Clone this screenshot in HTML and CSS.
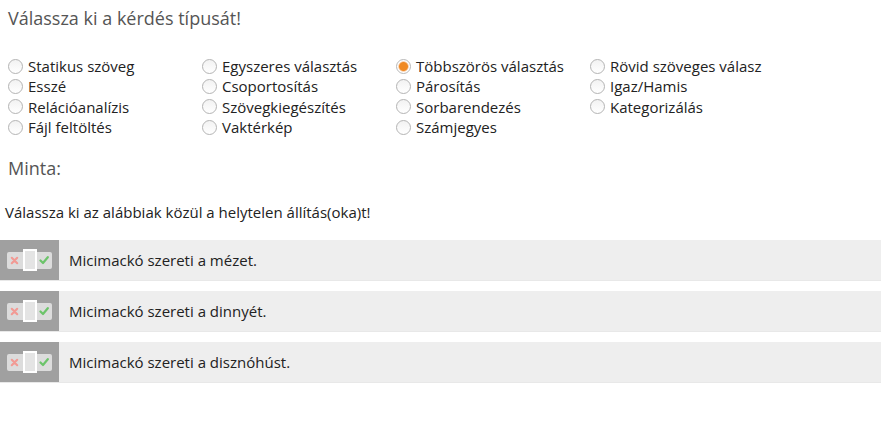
FILE: index.html
```html
<!DOCTYPE html>
<html lang="hu">
<head>
<meta charset="utf-8">
<link rel="stylesheet" href="styles.css">
</head>
<body>
<div class="page">
  <h2 class="heading">Válassza ki a kérdés típusát!</h2>
  <div class="types">
    <label class="opt"><span class="radio"></span>Statikus szöveg</label>
    <label class="opt"><span class="radio"></span>Egyszeres választás</label>
    <label class="opt"><span class="radio on"></span>Többszörös választás</label>
    <label class="opt"><span class="radio"></span>Rövid szöveges válasz</label>
    <label class="opt"><span class="radio"></span>Esszé</label>
    <label class="opt"><span class="radio"></span>Csoportosítás</label>
    <label class="opt"><span class="radio"></span>Párosítás</label>
    <label class="opt"><span class="radio"></span>Igaz/Hamis</label>
    <label class="opt"><span class="radio"></span>Relációanalízis</label>
    <label class="opt"><span class="radio"></span>Szövegkiegészítés</label>
    <label class="opt"><span class="radio"></span>Sorbarendezés</label>
    <label class="opt"><span class="radio"></span>Kategorizálás</label>
    <label class="opt"><span class="radio"></span>Fájl feltöltés</label>
    <label class="opt"><span class="radio"></span>Vaktérkép</label>
    <label class="opt"><span class="radio"></span>Számjegyes</label>
  </div>
  <h2 class="heading minta">Minta:</h2>
  <p class="question">Válassza ki az alábbiak közül a helytelen állítás(oka)t!</p>
  <div class="items">
    <div class="item">
      <div class="toggle-box"><div class="toggle"><span class="no"><svg viewBox="0 0 10 10" width="9" height="9"><path d="M2 2 L8 8 M8 2 L2 8" stroke="#f29a94" stroke-width="2.4" stroke-linecap="round"/></svg></span><span class="knob"></span><span class="yes"><svg viewBox="0 0 10 10" width="10" height="10"><path d="M1.5 5.5 L4 8 L8.8 2.2" stroke="#6cc46a" stroke-width="2.2" fill="none" stroke-linecap="round" stroke-linejoin="round"/></svg></span></div></div>
      <div class="text">Micimackó szereti a mézet.</div>
    </div>
    <div class="item">
      <div class="toggle-box"><div class="toggle"><span class="no"><svg viewBox="0 0 10 10" width="9" height="9"><path d="M2 2 L8 8 M8 2 L2 8" stroke="#f29a94" stroke-width="2.4" stroke-linecap="round"/></svg></span><span class="knob"></span><span class="yes"><svg viewBox="0 0 10 10" width="10" height="10"><path d="M1.5 5.5 L4 8 L8.8 2.2" stroke="#6cc46a" stroke-width="2.2" fill="none" stroke-linecap="round" stroke-linejoin="round"/></svg></span></div></div>
      <div class="text">Micimackó szereti a dinnyét.</div>
    </div>
    <div class="item">
      <div class="toggle-box"><div class="toggle"><span class="no"><svg viewBox="0 0 10 10" width="9" height="9"><path d="M2 2 L8 8 M8 2 L2 8" stroke="#f29a94" stroke-width="2.4" stroke-linecap="round"/></svg></span><span class="knob"></span><span class="yes"><svg viewBox="0 0 10 10" width="10" height="10"><path d="M1.5 5.5 L4 8 L8.8 2.2" stroke="#6cc46a" stroke-width="2.2" fill="none" stroke-linecap="round" stroke-linejoin="round"/></svg></span></div></div>
      <div class="text">Micimackó szereti a disznóhúst.</div>
    </div>
  </div>
</div>
</body>
</html>
```
FILE: styles.css
```css
html, body { margin: 0; padding: 0; background: #fff; }
body { font-family: "Open Sans", "Noto Sans", sans-serif; color: #222; }
.page { width: 881px; }
.heading {
  margin: 0;
  padding: 6px 8px 0;
  font-size: 18px;
  font-weight: normal;
  color: #555;
  line-height: 24px;
}
.types {
  display: grid;
  grid-template-columns: repeat(4, 194px);
  grid-auto-rows: 20.3px;
  padding: 26px 8px 0;
  font-size: 15px;
}
.opt { display: flex; align-items: center; white-space: nowrap; }
.radio {
  width: 15px; height: 15px;
  border: 1px solid #b4b4b4;
  border-radius: 50%;
  background: linear-gradient(#f2f2f2, #fff);
  margin-right: 5px;
  box-sizing: border-box;
  flex: none;
}
.radio.on {
  border-color: #b8b8b8;
  background: radial-gradient(circle, #f08a24 0, #f08a24 4px, #f6c9a0 4.8px, #fff 5.6px);
}
.minta { padding-top: 19px; }
.question { margin: 0; padding: 21px 5px 0; font-size: 15px; line-height: 22px; color: #222; }
.items { display: flex; flex-direction: column; gap: 10px; padding-top: 17px; }
.item {
  display: flex;
  height: 41px;
  box-sizing: border-box;
  background: #eee;
  border-bottom: 1px solid #e8e8e8;
}
.toggle-box {
  width: 59px; flex: none;
  background: #a0a0a0;
  display: flex; align-items: center; justify-content: center;
}
.toggle {
  display: flex; align-items: center;
  height: 17px;
  width: 45px;
  background: #dcdcdc;
  border-radius: 2px;
}
.toggle .no, .toggle .yes { flex: 1; display: flex; align-items: center; justify-content: center; }
.knob {
  width: 14px; height: 22px;
  box-sizing: border-box;
  border: 2px solid #fff;
  background: #e4e4e4;
  flex: none;
}
.text { display: flex; align-items: center; padding-left: 10px; font-size: 15px; color: #222; }
```
